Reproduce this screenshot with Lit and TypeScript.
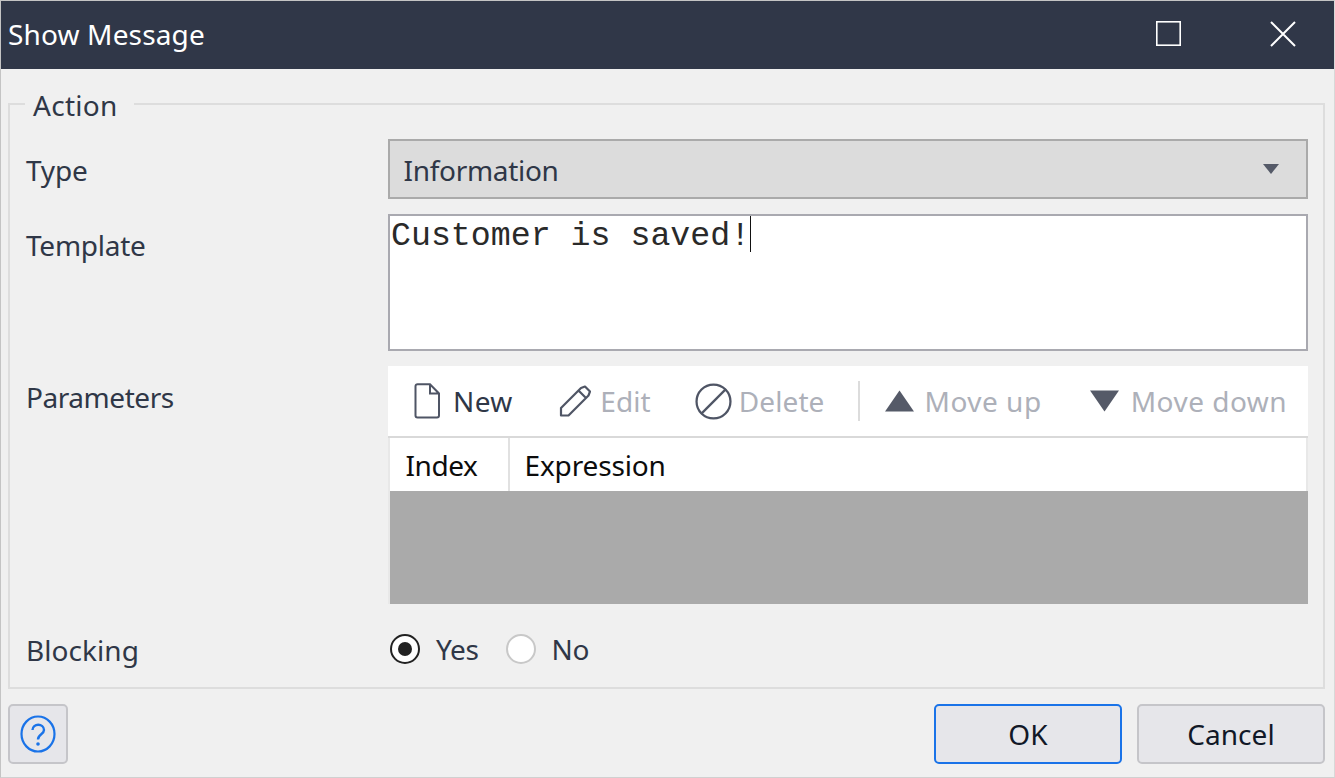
import { LitElement, html, css } from "lit";
import { customElement } from "lit/decorators.js";

@customElement("app-root")
export class AppRoot extends LitElement {
  static styles = css`
    :host {
      display: block;
      width: 1335px;
      height: 778px;
      box-sizing: border-box;
      background: #f0f0f0;
      border: 1px solid #c4c4c4;
      border-right-color: #d8d8d8;
      border-bottom-color: #d0d0d0;
      font-family: "Noto Sans", sans-serif;
      font-size: 28px;
      color: #2f3747;
      overflow: hidden;
    }
    * { box-sizing: border-box; }
    .title {
      height: 68px;
      background: #303748;
      color: #fff;
      display: flex;
      align-items: center;
      padding: 0 0 3px 7px;
    }
    .title .name { flex: 1; letter-spacing: 0.15px; line-height: 64px; }
    .title svg { display: block; }
    .max { margin-right: 89px; }
    .close { margin-right: 38px; }
    fieldset {
      margin: 16px 9px 0 7px;
      padding: 0 15px 0 16px;
      height: 604px;
      border: 2px solid #dddddd;
      min-width: 0;
    }
    legend {
      margin-left: -1px;
      padding: 0 16px 0 8px;
      line-height: 40px;
      height: 38px;
      letter-spacing: 0.3px;
    }
    .form {
      display: grid;
      grid-template-columns: 362px 920px;
      align-items: start;
      margin-top: 16px;
    }
    .label { letter-spacing: -0.4px; line-height: 40px; }
    .label.type { height: 60px; line-height: 62px; letter-spacing: -0.2px; }
    .label.tpl { padding-top: 11px; letter-spacing: -0.25px; }
    .label.par { padding-top: 11px; letter-spacing: -0.45px; }
    .label.blk { letter-spacing: 0.05px; }
    .select {
      height: 60px;
      border: 2px solid #aaaaaa;
      background: #dcdcdc;
      display: flex;
      align-items: center;
      padding: 2px 27px 0 13.5px;
      justify-content: space-between;
      letter-spacing: -0.3px;
    }
    .select svg { margin-top: -2px; }
    .r2 { margin-top: 15px; }
    .template {
      height: 137px;
      border: 2px solid #a9a9b0;
      background: #fff;
      padding: 0 0 0 1px;
      font-family: "Liberation Mono", monospace;
      font-size: 33.25px;
      line-height: 40px;
      color: #2a2a2a;
    }
    .caret {
      display: inline-block;
      width: 1px;
      height: 36px;
      background: #111;
      vertical-align: top;
    }
    .r3 { margin-top: 15px; }
    .toolbar {
      height: 70px;
      background: #fff;
      display: flex;
      align-items: center;
      padding-left: 25px;
    }
    .tool { display: flex; align-items: center; letter-spacing: 0.1px; }
    .tool.new { letter-spacing: 0.4px; }
    .tool.move { letter-spacing: 0.5px; }
    .tool.off { color: #adb0b9; }
    .gap-edit { margin-left: 46.5px; }
    .gap-del { margin-left: 44px; }
    .gap-sep { margin-left: 33px; }
    .gap-up { margin-left: 25px; }
    .gap-down { margin-left: 48px; }
    .i-new { margin-right: 12px; }
    .i-edit { margin-right: 9px; }
    .i-del { margin-right: 7px; }
    .i-up { margin-right: 11px; }
    .i-down { margin-right: 12px; }
    .sep { width: 2px; height: 40px; background: #dcdcdc; }
    .table { border-top: 2px solid #d9d9d9; background: #e8e8e8; }
    .thead {
      height: 53px;
      display: flex;
      color: #0c0c0c;
      background: #fff;
      margin-left: 2px;
      margin-right: 2px;
      line-height: 54px;
      letter-spacing: -0.45px;
    }
    .thead .c1 { width: 120px; padding-left: 15.5px; border-right: 2px solid #e1e1e1; }
    .thead .c2 { flex: 1; padding-left: 14.5px; letter-spacing: -0.15px; }
    .body { height: 113px; background: #aaaaaa; margin-left: 2px; }
    .r4 { margin-top: 26px; }
    .radios { display: flex; align-items: center; height: 38px; padding-left: 2px; letter-spacing: -0.35px; }
    .radio {
      width: 30px;
      height: 30px;
      border-radius: 50%;
      background: #fff;
      border: 2px solid #c8c8c8;
      margin-right: 16px;
    }
    .radio.on {
      border-color: #222;
      display: flex;
      align-items: center;
      justify-content: center;
    }
    .radio.on::after {
      content: "";
      width: 14px;
      height: 14px;
      border-radius: 50%;
      background: #222;
    }
    .no { margin-left: 27px; }
    .footer {
      display: flex;
      align-items: center;
      margin: 15px 9px 0 7px;
    }
    .btn {
      height: 60px;
      border: 2px solid #c5c5c9;
      border-radius: 5px;
      background: #e6e6ea;
      color: #111827;
      display: flex;
      align-items: center;
      justify-content: center;
      letter-spacing: 0.05px;
    }
    .help { width: 60px; }
    .spacer { flex: 1; }
    .ok { width: 188px; border-color: #1a73e8; margin-right: 15px; }
    .cancel { width: 188px; }
  `;

  render() {
    return html`
      <div class="title">
        <span class="name">Show Message</span>
        <svg class="max" width="25" height="25" viewBox="0 0 25 25"><rect x="0.8" y="0.8" width="23.400" height="23.400" fill="none" stroke="#fff" stroke-width="1.600"/></svg>
        <svg class="close" width="26" height="26" viewBox="0 0 26 26"><path d="M1 1L25 25M25 1L1 25" fill="none" stroke="#fff" stroke-width="2"/></svg>
      </div>
      <fieldset>
        <legend>Action</legend>
        <div class="form">
          <div class="label type">Type</div>
          <div class="select">
            <span>Information</span>
            <svg width="16" height="12" viewBox="0 0 16 12"><path d="M0 1H16L8 11Z" fill="#555a68"/></svg>
          </div>
          <div class="label tpl r2">Template</div>
          <div class="template r2">Customer is saved!<span class="caret"></span></div>
          <div class="label par r3">Parameters</div>
          <div class="r3">
            <div class="toolbar">
              <div class="tool new">
                <svg class="i-new" width="28" height="38" viewBox="0 0 28 38"><path d="M2.500 4.200A2 2 0 0 1 4.500 2.200H17L26 11.500V33.500A2 2 0 0 1 24 35.500H4.500A2 2 0 0 1 2.500 33.500ZM17 2.500V11.500H26" fill="none" stroke="#4f5565" stroke-width="2"/></svg>
                New
              </div>
              <div class="tool off gap-edit">
                <svg class="i-edit" width="32" height="32" viewBox="0 0 32 32"><path d="M2 30.500V23L22 3L26 1.500L31 6.500L29.500 10.500L9.500 30.500ZM19.500 5.500L27 13" fill="none" stroke="#4f5565" stroke-width="2.200" stroke-linejoin="round"/></svg>
                Edit
              </div>
              <div class="tool off gap-del">
                <svg class="i-del" width="37" height="37" viewBox="0 0 36 36"><circle cx="18" cy="18" r="16.500" fill="none" stroke="#4f5565" stroke-width="2.200"/><path d="M6 30L30 6" stroke="#4f5565" stroke-width="2.200"/></svg>
                Delete
              </div>
              <div class="sep gap-sep"></div>
              <div class="tool off move gap-up">
                <svg class="i-up" width="29" height="22" viewBox="0 0 29 22"><path d="M14.500 0.500L29 21.500H0Z" fill="#555a68"/></svg>
                Move up
              </div>
              <div class="tool off move gap-down">
                <svg class="i-down" width="29" height="22" viewBox="0 0 29 22"><path d="M14.500 21.500L29 0.500H0Z" fill="#555a68"/></svg>
                Move down
              </div>
            </div>
            <div class="table">
              <div class="thead"><div class="c1">Index</div><div class="c2">Expression</div></div>
              <div class="body"></div>
            </div>
          </div>
          <div class="label blk r4">Blocking</div>
          <div class="radios r4">
            <span class="radio on"></span><span>Yes</span>
            <span class="radio no"></span><span>No</span>
          </div>
        </div>
      </fieldset>
      <div class="footer">
        <div class="btn help">
          <svg width="36" height="38" viewBox="0 0 36 38"><ellipse cx="18" cy="19" rx="16.500" ry="17.500" fill="none" stroke="#1a73e8" stroke-width="2.200"/><path d="M12.500 15C12.500 8 24 8 24 15C24 19.500 18 19 18 24.500" fill="none" stroke="#1a73e8" stroke-width="2.400"/><circle cx="18" cy="29" r="1.800" fill="#1a73e8"/></svg>
        </div>
        <div class="spacer"></div>
        <div class="btn ok">OK</div>
        <div class="btn cancel">Cancel</div>
      </div>
    `;
  }
}
